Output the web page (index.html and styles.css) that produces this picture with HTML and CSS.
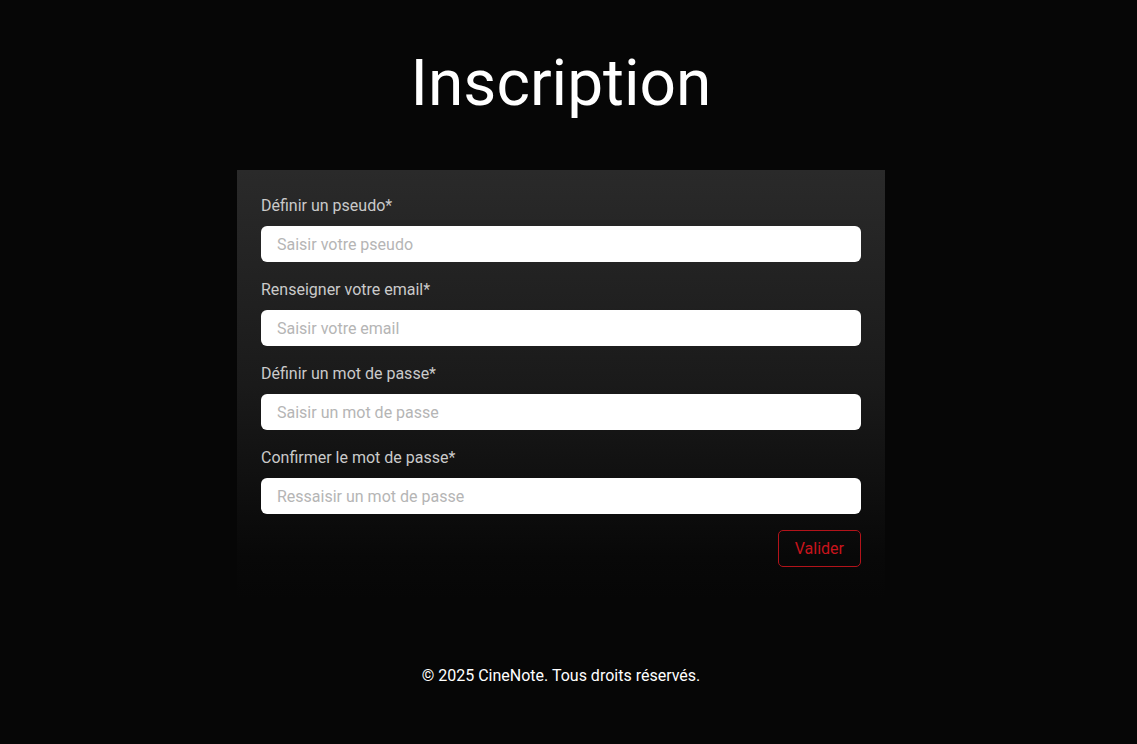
FILE: index.html
```html
<!DOCTYPE html>
<html lang="fr">
<head>
<meta charset="utf-8">
<title>Inscription</title>
<link rel="stylesheet" href="styles.css">
</head>
<body>
<main class="page">
  <h1 class="title">Inscription</h1>
  <form class="card">
    <div class="field">
      <label class="label" for="pseudo">Définir un pseudo*</label>
      <input class="input" id="pseudo" type="text" placeholder="Saisir votre pseudo">
    </div>
    <div class="field">
      <label class="label" for="email">Renseigner votre email*</label>
      <input class="input" id="email" type="email" placeholder="Saisir votre email">
    </div>
    <div class="field">
      <label class="label" for="pw">Définir un mot de passe*</label>
      <input class="input" id="pw" type="password" placeholder="Saisir un mot de passe">
    </div>
    <div class="field">
      <label class="label" for="pw2">Confirmer le mot de passe*</label>
      <input class="input" id="pw2" type="password" placeholder="Ressaisir un mot de passe">
    </div>
    <div class="actions">
      <button class="btn" type="button">Valider</button>
    </div>
  </form>
  <footer class="footer">© 2025 CineNote. Tous droits réservés.</footer>
</main>
</body>
</html>
```

FILE: styles.css
```css
* { box-sizing: border-box; }
html, body {
  margin: 0;
  padding: 0;
  background: #060606;
  color: #fff;
  font-family: Roboto, "Liberation Sans", Arial, sans-serif;
}
.page {
  display: flex;
  flex-direction: column;
  align-items: center;
  min-height: 744px;
  padding-right: 15px;
}
.title {
  margin: 44px 0 0;
  font-size: 64px;
  font-weight: 400;
  line-height: 80px;
  color: #fff;
}
.card {
  margin-top: 46px;
  width: 648px;
  padding: 26px 24px 32px;
  background: linear-gradient(to bottom, #2a2a2a 0%, #1a1a1a 50%, #080808 90%, #060606 100%);
  display: flex;
  flex-direction: column;
}
.field {
  display: flex;
  flex-direction: column;
  margin-bottom: 18px;
}
.label {
  font-size: 16px;
  line-height: 19px;
  color: #cacaca;
  margin-bottom: 11px;
}
.input {
  height: 36px;
  border: none;
  border-radius: 6px;
  background: #fff;
  padding: 0 16px;
  font-family: inherit;
  font-size: 16px;
  color: #222;
  outline: none;
}
.input::placeholder { color: #b5b5b5; }
.actions {
  display: flex;
  justify-content: flex-end;
  margin-top: -2px;
}
.btn {
  height: 37px;
  padding: 0 16px;
  background: transparent;
  border: 1px solid #b3131a;
  border-radius: 5px;
  color: #c8141c;
  font-family: inherit;
  font-size: 16px;
}
.footer {
  margin-top: 67px;
  font-size: 16px;
  line-height: 19px;
  color: #fff;
}
```
